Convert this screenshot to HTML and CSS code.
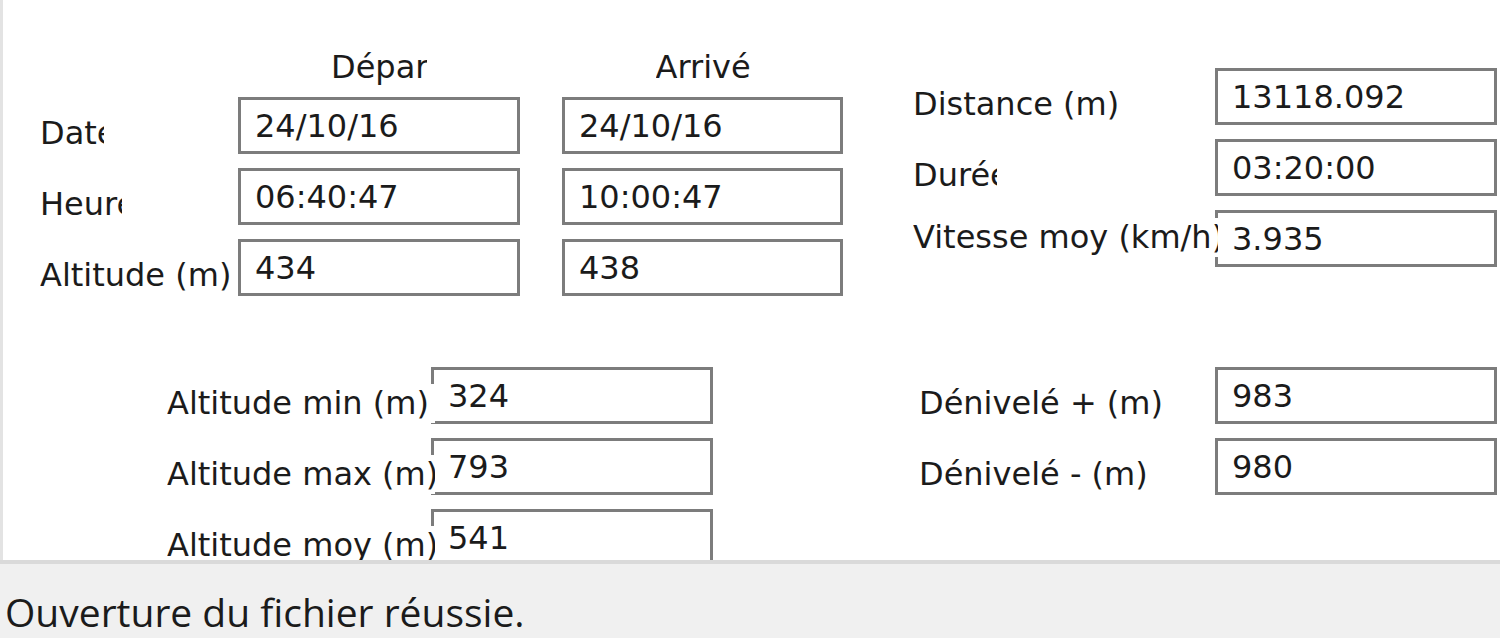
FILE: index.html
```html
<!DOCTYPE html>
<html lang="fr">
<head>
  <meta charset="UTF-8" />
  <title>Trace GPS</title>
  <link rel="stylesheet" href="styles.css">
</head>
<body>
  <div class="window">
    <div class="panel">
      <div class="top">
        <div class="grid times">
          <span></span>
          <div class="col-head head-depart">Départ</div>
          <div class="col-head head-arrivee">Arrivée</div>

          <label class="field-label clip-date">Date</label>
          <div class="text-box">24/10/16</div>
          <div class="text-box">24/10/16</div>

          <label class="field-label clip-heure">Heure</label>
          <div class="text-box">06:40:47</div>
          <div class="text-box">10:00:47</div>

          <label class="field-label">Altitude (m)</label>
          <div class="text-box">434</div>
          <div class="text-box">438</div>
        </div>

        <div class="grid summary">
          <label class="field-label">Distance (m)</label>
          <div class="text-box">13118.092</div>

          <label class="field-label clip-duree">Durée</label>
          <div class="text-box">03:20:00</div>

          <label class="field-label clip-vitesse">Vitesse moy (km/h)</label>
          <div class="text-box">3.935</div>
        </div>
      </div>

      <div class="bottom">
        <div class="grid altitudes">
          <label class="field-label clip-alt">Altitude min (m)</label>
          <div class="text-box">324</div>

          <label class="field-label clip-alt">Altitude max (m)</label>
          <div class="text-box">793</div>

          <label class="field-label clip-alt">Altitude moy (m)</label>
          <div class="text-box">541</div>
        </div>

        <div class="grid elevation">
          <label class="field-label">Dénivelé + (m)</label>
          <div class="text-box">983</div>

          <label class="field-label">Dénivelé - (m)</label>
          <div class="text-box">980</div>
        </div>
      </div>
    </div>

    <div class="status">Ouverture du fichier réussie.</div>
  </div>
</body>
</html>
```

FILE: styles.css
```css
body {
  margin: 0;
  background: #fff;
  font-family: 'DejaVu Sans', sans-serif;
  font-size: 32px;
  color: #1b1b1b;
}
.window {
  width: 1500px;
  height: 638px;
  overflow: hidden;
}
.panel {
  height: 560px;
  box-sizing: border-box;
  border-left: 3px solid #e3e3e3;
  background: #fff;
  overflow: hidden;
}
.top,
.bottom {
  display: flex;
  align-items: flex-start;
}
.bottom {
  margin-top: 71px;
}
.grid {
  display: grid;
  row-gap: 14px;
  grid-auto-rows: 57px;
}
.times {
  grid-template-columns: 156px 282px 281px;
  grid-template-rows: 35px;
  column-gap: 42px;
  margin: 48px 0 0 37px;
}
.summary {
  grid-template-columns: 302px 282px;
  margin: 68px 0 0 70px;
}
.altitudes {
  grid-template-columns: 264px 282px;
  margin-left: 164px;
}
.elevation {
  grid-template-columns: 296px 282px;
  margin-left: 206px;
}

.col-head {
  justify-self: center;
  width: 96px;
  height: 39px;
  line-height: 39px;
  white-space: nowrap;
  overflow: hidden;
}
.head-arrivee {
  width: 94px;
}

.field-label {
  justify-self: start;
  margin-top: 17px;
  height: 39px;
  line-height: 39px;
  background: #fff;
  white-space: nowrap;
  overflow: hidden;
  position: relative;
  z-index: 1;
}
.clip-date { width: 64px; }
.clip-heure { width: 82px; }
.clip-duree { width: 84px; }
.clip-vitesse {
  width: 305px;
  margin-top: 8px;
}
.clip-alt { width: 268px; }

.text-box {
  height: 57px;
  box-sizing: border-box;
  border: 3px solid #7c7c7c;
  padding: 2px 14px 0;
  line-height: 49px;
  background: #fff;
  white-space: nowrap;
  overflow: hidden;
}

.status {
  height: 78px;
  box-sizing: border-box;
  border-top: 4px solid #dadada;
  background: #f0f0f0;
  padding: 21px 0 0 5px;
  font-family: 'Open Sans', sans-serif;
  font-size: 39px;
  line-height: 53px;
  color: #1b1b1b;
  white-space: nowrap;
}
```
